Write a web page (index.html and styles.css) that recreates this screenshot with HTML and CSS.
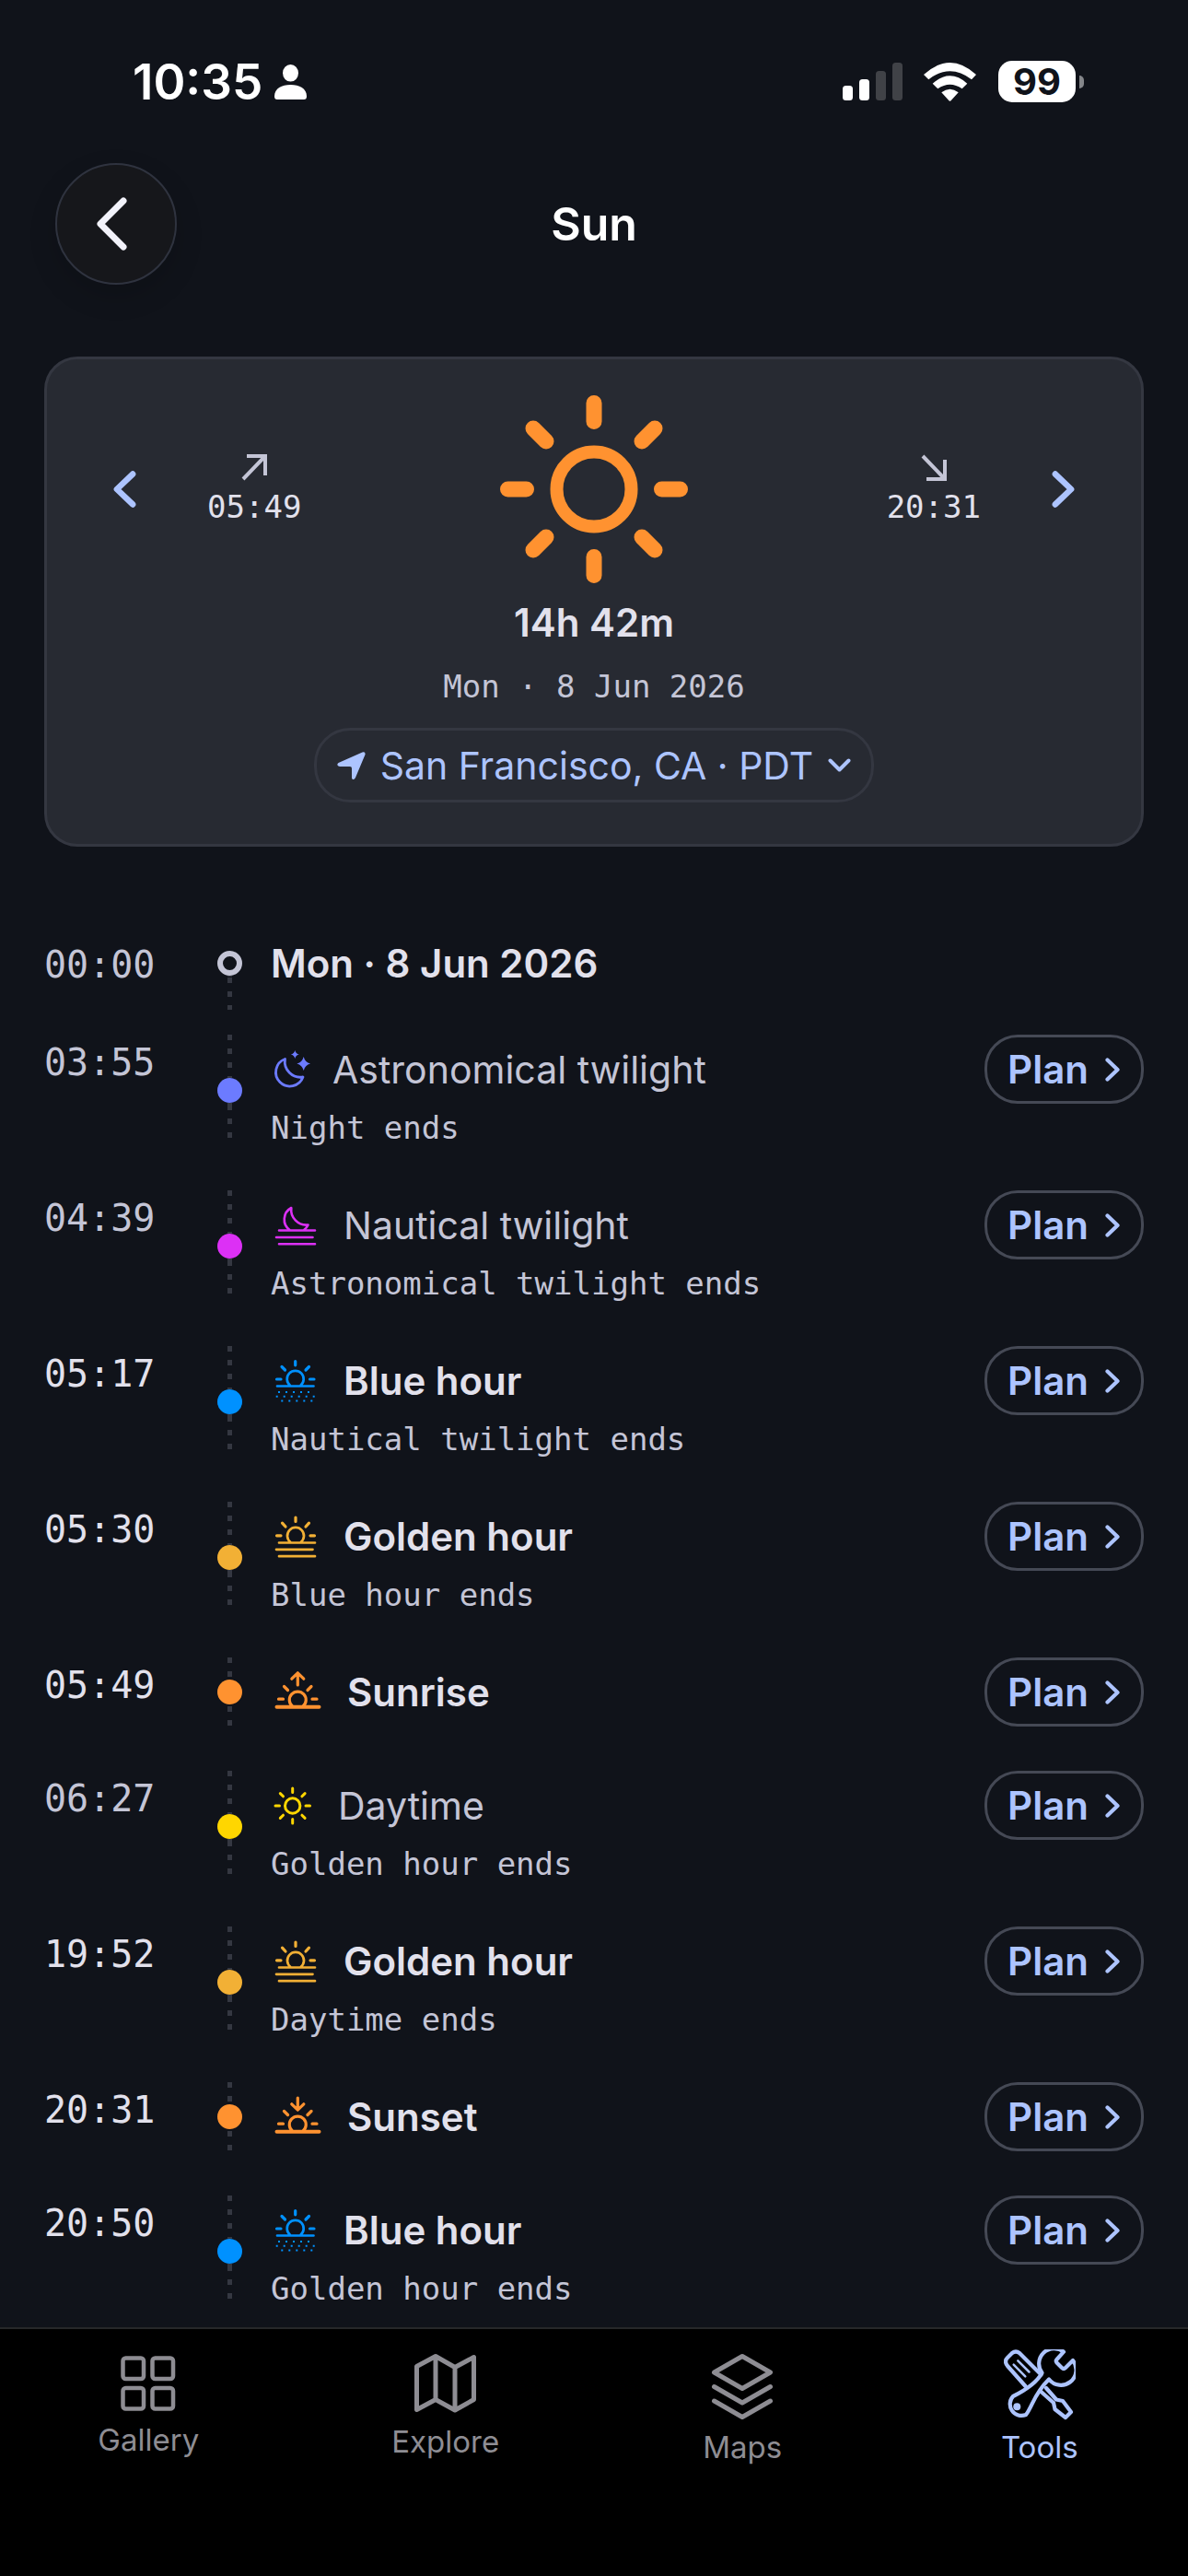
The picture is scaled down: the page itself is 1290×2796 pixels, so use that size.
FILE: index.html
```html
<!DOCTYPE html>
<html lang="en">
<head>
  <meta charset="UTF-8" />
  <meta name="viewport" content="width=device-width, initial-scale=1.0"/>
  <title>Sun</title>
  <link rel="stylesheet" href="styles.css">
</head>
<body>

  <!-- shared icons -->
  <svg class="sprite" aria-hidden="true">
    <symbol id="chevron" viewBox="0 0 16 26">
      <path d="M2.5 2.5L13.5 13L2.5 23.5" stroke-width="4.2"/>
    </symbol>
    <symbol id="night" viewBox="0 0 43 60">
      <path d="M15.5 18.5A15.2 15.2 0 1 0 35 38A17 17 0 0 1 15.5 18.5z" stroke-width="2.8"/>
      <path class="fill" d="M26.3 9q.9 3.7 4.5 4.5-3.6.8-4.5 4.5-.9-3.7-4.5-4.5 3.6-.8 4.5-4.5zM35.7 16q1.5 6 7.3 7.5-5.8 1.500-7.3 7.5-1.500-6-7.3-7.5 5.8-1.500 7.3-7.5z"/>
    </symbol>
    <symbol id="nautical" viewBox="0 0 55 60">
      <path d="M20.5 35A14.2 14.2 0 0 1 22.3 11A16.5 16.5 0 0 0 40.5 29.5Q39 33 36 35M9 35.5H48M6 43H45.5M9 50.3H48" stroke-width="2.6"/>
    </symbol>
    <symbol id="blue" viewBox="0 0 55 60">
      <path d="M21 34.8A9 9 0 1 1 32.4 34.8M7 35.5H46.5" stroke-width="2.7"/>
      <path d="M26.7 8.5V12.8M6.5 28H11M42.5 28H47M12 14.5L15.5 18M41.5 14.5L38 18" stroke-width="3.2"/>
      <path class="dots" d="M8 42H43M5.7 46.8H48M11.3 51.5H46" stroke-width="2" stroke-dasharray="2 6"/>
    </symbol>
    <symbol id="golden" viewBox="0 0 55 60">
      <path d="M21.5 36A9 9 0 1 1 32.5 36M9 36.5H48M6 43.8H45.5M9 51.2H48" stroke-width="2.7"/>
      <path d="M27 9V13.5M6.5 28.8H11M43 28.8H47.5M12.5 15.2L16 19M41.5 15.2L38 19" stroke-width="3.2"/>
    </symbol>
    <symbol id="sunrise" viewBox="0 0 59 60">
      <path d="M23.5 45A9 9 0 1 1 35 45" stroke-width="3.2"/>
      <path d="M6.5 45.8H52.5" stroke-width="4"/>
      <path d="M8.5 37.2H13.5M45 37.2H50M14.5 23.5L18.5 27.5M44 23.5L40 27.5M29.3 9V22M22.8 15.2L29.3 8.8L35.8 15.2" stroke-width="3.2"/>
    </symbol>
    <symbol id="sunset" viewBox="0 0 59 60">
      <path d="M23.5 45A9 9 0 1 1 35 45" stroke-width="3.2"/>
      <path d="M6.5 45.8H52.5" stroke-width="4"/>
      <path d="M8.5 37.2H13.5M45 37.2H50M14.5 23.5L18.5 27.5M44 23.5L40 27.5M29.3 9V22M22.8 15.8L29.3 22.2L35.8 15.8" stroke-width="3.2"/>
    </symbol>
    <symbol id="day" viewBox="0 0 49 60">
      <circle cx="23.7" cy="30" r="8.2" stroke-width="3"/>
      <path d="M23.7 11V15.5M23.7 44.5V49M5 30H9.5M38 30H42.5M10.3 16.6L13.5 19.8M37.1 16.6L33.9 19.8M10.3 43.4L13.5 40.2M37.1 43.4L33.9 40.2" stroke-width="3"/>
    </symbol>
  </svg>

  <div class="status">
    <div class="status-left">
      <span class="clock">10:35</span>
      <svg width="35" height="38" viewBox="0 0 35 38">
        <ellipse cx="17.5" cy="9.3" rx="8.5" ry="9.3"/>
        <path d="M0 34.5C0 26 8 22 17.5 22S35 26 35 34.5Q35 38 32 38H3Q0 38 0 34.5z"/>
      </svg>
    </div>
    <div class="status-right">
      <svg width="65" height="41" viewBox="0 0 65 41">
        <rect y="25" width="11" height="16" rx="3.5"/>
        <rect x="18" y="18" width="11" height="23" rx="3.5"/>
        <rect class="off" x="36" y="9" width="11" height="32" rx="3.5"/>
        <rect class="off" x="54" width="11" height="41" rx="3.5"/>
      </svg>
      <svg width="58" height="42" viewBox="0 0 58 42">
        <path d="M0 13Q28.5-13 57 13L52 18.3Q28.5.3 5.3 18.3z"/>
        <path d="M9.7 22.7Q28.5 6 47.3 22.7L41.7 28.3Q28.5 19 15.3 28.3z"/>
        <path d="M19.3 32.3Q28.5 25 37.7 32.3L30 40.8Q28.5 42.5 27 40.8z"/>
      </svg>
      <div class="battery"><span>99</span></div>
    </div>
  </div>

  <header class="header">
    <a class="back" href="#" aria-label="Back">
      <svg width="34" height="58" viewBox="0 0 34 58"><path d="M30 4L5 29L30 54"/></svg>
    </a>
    <h1>Sun</h1>
  </header>

  <main>
    <section class="card">
      <div class="hero">
        <div class="side">
          <button class="step prev" aria-label="Previous day"><svg><use href="#chevron"/></svg></button>
          <div class="event">
            <svg width="28" height="29" viewBox="0 0 28 29"><path d="M2 27L26 2M6 2H26V23"/></svg>
            <span>05:49</span>
          </div>
        </div>
        <svg class="sun" viewBox="0 0 204 204">
          <circle cx="102" cy="102" r="40.5" stroke-width="14"/>
          <path d="M102 8.5V28.5M102 175.5V195.5M8.5 102H28.5M175.5 102H195.5M36 36L50 50M168 36L154 50M36 168L50 154M168 168L154 154" stroke-width="17"/>
        </svg>
        <div class="side">
          <div class="event">
            <svg width="28" height="29" viewBox="0 0 28 29"><path d="M2 2L26 27M26 6V27H6"/></svg>
            <span>20:31</span>
          </div>
          <button class="step" aria-label="Next day"><svg><use href="#chevron"/></svg></button>
        </div>
      </div>
      <div class="length">14h 42m</div>
      <div class="date">Mon · 8 Jun 2026</div>
      <button class="location">
        <svg width="31" height="30" viewBox="0 0 31 30"><path class="fill" d="M27.5.5Q31-.5 30.5 3L20 28Q18.500 31 16.500 29.500Q16 29 16 28V18Q16 16 14 16H3Q-1.500 15 1.5 12z"/></svg>
        San Francisco, CA · PDT
        <svg width="25" height="15" viewBox="0 0 25 15"><path d="M2.5 2.5L12.5 12.5L22.5 2.5" stroke-width="4"/></svg>
      </button>
    </section>

    <ol class="timeline">
      <li class="row first">
        <time>00:00</time>
        <div class="rail"><i class="dot"></i></div>
        <div class="info"><div class="title strong">Mon · 8 Jun 2026</div></div>
      </li>
      <li class="row night">
        <time>03:55</time>
        <div class="rail"><i class="dot"></i></div>
        <div class="info">
          <div class="title"><svg width="43" height="60"><use href="#night"/></svg>Astronomical twilight</div>
          <div class="sub">Night ends</div>
        </div>
        <button class="plan">Plan <svg><use href="#chevron"/></svg></button>
      </li>
      <li class="row nautical">
        <time>04:39</time>
        <div class="rail"><i class="dot"></i></div>
        <div class="info">
          <div class="title"><svg width="55" height="60"><use href="#nautical"/></svg>Nautical twilight</div>
          <div class="sub">Astronomical twilight ends</div>
        </div>
        <button class="plan">Plan <svg><use href="#chevron"/></svg></button>
      </li>
      <li class="row blue strong">
        <time>05:17</time>
        <div class="rail"><i class="dot"></i></div>
        <div class="info">
          <div class="title"><svg width="55" height="60"><use href="#blue"/></svg>Blue hour</div>
          <div class="sub">Nautical twilight ends</div>
        </div>
        <button class="plan">Plan <svg><use href="#chevron"/></svg></button>
      </li>
      <li class="row golden strong">
        <time>05:30</time>
        <div class="rail"><i class="dot"></i></div>
        <div class="info">
          <div class="title"><svg width="55" height="60"><use href="#golden"/></svg>Golden hour</div>
          <div class="sub">Blue hour ends</div>
        </div>
        <button class="plan">Plan <svg><use href="#chevron"/></svg></button>
      </li>
      <li class="row orange strong">
        <time>05:49</time>
        <div class="rail"><i class="dot"></i></div>
        <div class="info">
          <div class="title"><svg width="59" height="60"><use href="#sunrise"/></svg>Sunrise</div>
        </div>
        <button class="plan">Plan <svg><use href="#chevron"/></svg></button>
      </li>
      <li class="row day">
        <time>06:27</time>
        <div class="rail"><i class="dot"></i></div>
        <div class="info">
          <div class="title"><svg width="49" height="60"><use href="#day"/></svg>Daytime</div>
          <div class="sub">Golden hour ends</div>
        </div>
        <button class="plan">Plan <svg><use href="#chevron"/></svg></button>
      </li>
      <li class="row golden strong">
        <time>19:52</time>
        <div class="rail"><i class="dot"></i></div>
        <div class="info">
          <div class="title"><svg width="55" height="60"><use href="#golden"/></svg>Golden hour</div>
          <div class="sub">Daytime ends</div>
        </div>
        <button class="plan">Plan <svg><use href="#chevron"/></svg></button>
      </li>
      <li class="row orange strong">
        <time>20:31</time>
        <div class="rail"><i class="dot"></i></div>
        <div class="info">
          <div class="title"><svg width="59" height="60"><use href="#sunset"/></svg>Sunset</div>
        </div>
        <button class="plan">Plan <svg><use href="#chevron"/></svg></button>
      </li>
      <li class="row blue strong">
        <time>20:50</time>
        <div class="rail"><i class="dot"></i></div>
        <div class="info">
          <div class="title"><svg width="55" height="60"><use href="#blue"/></svg>Blue hour</div>
          <div class="sub">Golden hour ends</div>
        </div>
        <button class="plan">Plan <svg><use href="#chevron"/></svg></button>
      </li>
    </ol>
  </main>

  <nav class="tabs">
    <a href="#">
      <svg width="78" height="70" viewBox="0 0 78 70">
        <g stroke-width="4.5">
          <rect x="11.5" y="9.5" width="22.5" height="22.5" rx="3"/>
          <rect x="43.5" y="9.5" width="22.5" height="22.5" rx="3"/>
          <rect x="11.5" y="42" width="22.5" height="22.5" rx="3"/>
          <rect x="43.5" y="42" width="22.5" height="22.5" rx="3"/>
        </g>
      </svg>
      Gallery
    </a>
    <a href="#">
      <svg width="78" height="72" viewBox="0 0 78 72">
        <path d="M7.5 18.5L28 7.5L49 19.5L69.5 8.5V54.5L49 66L28 54.5L7.5 65.5zM28 8V54M49 20V66"/>
      </svg>
      Explore
    </a>
    <a href="#">
      <svg width="78" height="78" viewBox="0 0 78 78">
        <path d="M39 7.5L69.5 25L39 42.5L8.5 25zM8.5 40.5L39 58L69.5 40.5M8.5 56L39 73.5L69.5 56"/>
      </svg>
      Maps
    </a>
    <a href="#" class="active">
      <svg width="78" height="78" viewBox="0 0 78 78">
        <path stroke-width="4.2" d="M65 2.7A16.5 16.5 0 0 0 41.5 25.5C37 34 28 42 10 51A12.5 12.5 0 0 0 24 71C31 62 33 48 49 32.5A16.5 16.5 0 0 0 75 12L67 20Q65 22 63 20L57.5 14.5Q56 12.5 57.5 11z"/>
        <path stroke-width="4.2" d="M40.5 27.5L17 4Q13 1 9 4L4 9Q0 13 4 18L23.5 40M46 42L57 54.5L64 56L73 68L67 74L55.5 65L54 58L40.5 46"/>
        <path stroke-width="2.500" d="M10.7 16.7L23.3 29.3M15.3 12.3L27.5 24.5"/>
        <circle class="fill" cx="14.3" cy="62.3" r="4"/>
      </svg>
      Tools
    </a>
  </nav>

</body>
</html>
```

FILE: styles.css
```css
:root {
  --bg: #10131a;
  --card: #272a32;
  --line: #343741;
  --outline: #454955;
  --text: #e2e1ec;
  --muted: #c4c5d6;
  --accent: #adc4ff;
  --mono: "DejaVu Sans Mono", monospace;
}

* {
  box-sizing: border-box;
}

body {
  margin: 0;
  min-height: 100vh;
  display: flex;
  flex-direction: column;
  background: var(--bg);
  color: var(--text);
  font-family: Inter, "Liberation Sans", sans-serif;
  font-size: 42px;
  line-height: 58px;
}

button {
  font: inherit;
  color: var(--accent);
  background: none;
  border: none;
  padding: 0;
  cursor: pointer;
}

a {
  text-decoration: none;
}

svg {
  display: block;
  flex: none;
  fill: none;
  stroke: currentColor;
  stroke-width: 5;
  stroke-linecap: round;
  stroke-linejoin: round;
}

.sprite {
  position: absolute;
  width: 0;
  height: 0;
}

.fill {
  fill: currentColor;
  stroke: none;
}

.dots {
  stroke-linecap: butt;
}

/* status bar */
.status {
  display: flex;
  justify-content: space-between;
  align-items: center;
  height: 177px;
  padding: 0 113px 0 144px;
  color: #fff;
  font-weight: 600;
}

.status svg {
  fill: #fff;
  stroke: none;
}

.status .off {
  fill: #404247;
}

.status-left,
.status-right {
  display: flex;
  align-items: center;
}

.status-left {
  gap: 13px;
}

.status-right {
  gap: 23px;
}

.clock {
  font-size: 53px;
}

.battery {
  display: flex;
  align-items: center;
  gap: 4px;
}

.battery span {
  width: 84px;
  height: 45px;
  line-height: 45px;
  border-radius: 15px;
  background: #fff;
  color: var(--bg);
  font-size: 40px;
  font-weight: 700;
  text-align: center;
}

.battery::after {
  content: "";
  width: 5px;
  height: 14px;
  border-radius: 0 5px 5px 0;
  background: #84868a;
}

/* header */
.header {
  display: grid;
  grid-template-columns: 1fr auto 1fr;
  align-items: center;
  padding: 0 60px;
}

.back {
  display: flex;
  align-items: center;
  justify-content: center;
  width: 132px;
  height: 132px;
  padding-right: 10px;
  border: 2px solid #2f333f;
  border-radius: 50%;
  background: #16171b;
  color: #f2f2fa;
  box-shadow: 0 12px 30px rgba(0, 0, 0, 0.15);
}

.back svg {
  stroke-width: 7;
}

h1 {
  margin: 0;
  font-size: 50px;
  font-weight: 600;
  color: #fff;
}

main {
  padding: 78px 48px 22px;
}

/* day card */
.card {
  display: flex;
  flex-direction: column;
  align-items: center;
  padding: 39px 72px 45px;
  border: 3px solid var(--line);
  border-radius: 36px;
  background: var(--card);
}

.hero {
  display: flex;
  align-items: center;
  justify-content: space-between;
  width: 100%;
}

.side {
  display: flex;
  align-items: center;
  gap: 77px;
}

.step svg {
  width: 25px;
  height: 42px;
}

.prev {
  transform: rotate(180deg);
}

.event {
  display: flex;
  flex-direction: column;
  align-items: center;
  padding-top: 4px;
  font-family: var(--mono);
  font-size: 34px;
  line-height: 46px;
}

.event svg {
  margin-bottom: 5px;
  color: var(--muted);
  stroke-width: 4;
  stroke-linecap: butt;
  stroke-linejoin: miter;
}

.sun {
  width: 204px;
  height: 204px;
  color: #ff9230;
}

.length {
  margin-top: 14px;
  font-weight: 600;
}

.date {
  margin: 17px 0 22px;
  font-family: var(--mono);
  font-size: 34px;
  line-height: 46px;
  color: var(--muted);
}

.location {
  display: flex;
  align-items: center;
  gap: 16px;
  height: 81px;
  padding: 0 22px;
  border: 3px solid var(--line);
  border-radius: 39px;
  font-size: 41px;
}

/* timeline */
.timeline {
  list-style: none;
  margin: 98px 0 0;
  padding: 0;
}

.row {
  display: grid;
  grid-template-columns: 188px 27px 1fr auto;
  align-items: start;
  margin-bottom: 48px;
  color: var(--muted);
}

.row:last-child {
  margin-bottom: 0;
}

time {
  font-family: var(--mono);
  font-size: 40px;
  line-height: 60px;
}

.rail {
  align-self: stretch;
  display: flex;
  flex-direction: column;
  align-items: center;
}

.rail::before,
.rail::after {
  content: "";
  flex: 1;
  width: 5px;
  background: repeating-linear-gradient(#343741 0 6px, transparent 6px 15px);
}

.rail::after {
  background-position: 0 2px;
}

.dot {
  width: 27px;
  height: 27px;
  border-radius: 50%;
  background: var(--event);
}

.info {
  padding-left: 31px;
}

.title {
  display: flex;
  align-items: center;
  gap: 24px;
  height: 75px;
  font-size: 41px;
}

.title svg {
  color: var(--event);
}

.strong,
.strong .title {
  color: var(--text);
}

.strong .title,
.title.strong {
  font-size: 42px;
  font-weight: 600;
}

.sub {
  margin-top: 6px;
  font-family: var(--mono);
  font-size: 34px;
  line-height: 40px;
  color: var(--muted);
}

.plan {
  display: flex;
  align-items: center;
  gap: 18px;
  height: 75px;
  padding: 0 23px 0 22px;
  border: 3px solid var(--outline);
  border-radius: 36px;
  font-weight: 600;
}

.plan svg {
  width: 16px;
  height: 26px;
}

.first {
  min-height: 79px;
  margin-bottom: 27px;
}

.first .rail::before {
  flex: 0 0 15px;
  background: none;
}

.first .dot {
  border: 6px solid var(--muted);
}

.first .title {
  height: 58px;
}

.night { --event: #6c7bff; }
.nautical { --event: #dc30f5; }
.blue { --event: #0091ff; }
.golden { --event: #f2b035; }
.orange { --event: #ff9230; }
.day { --event: #ffd600; }

/* tab bar */
.tabs {
  display: grid;
  grid-template-columns: repeat(4, 1fr);
  flex: 1;
  padding-top: 22px;
  border-top: 2px solid #272829;
  background: #000;
}

.tabs a {
  display: flex;
  flex-direction: column;
  align-items: center;
  gap: 8px;
  font-size: 33px;
  line-height: 40px;
  color: #8e8d93;
}

.tabs .active {
  color: var(--accent);
}
```
